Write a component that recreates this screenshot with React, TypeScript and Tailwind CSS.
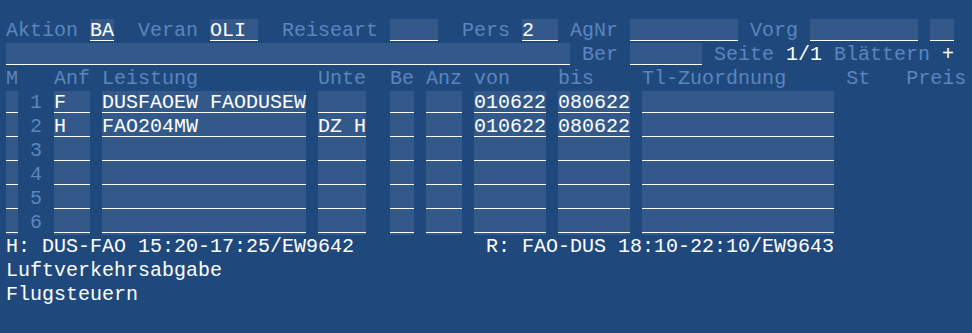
import React from 'react';

// 80-column host screen: each cell is 12px wide, each row 24px tall
const Lbl = ({ children, className = '' }: { children: React.ReactNode; className?: string }) => (
  <span className={`whitespace-pre text-[#5b85bc] ${className}`}>{children}</span>
);

const Val = ({ children, className = '' }: { children: React.ReactNode; className?: string }) => (
  <span className={`whitespace-pre text-white ${className}`}>{children}</span>
);

// field in the header area: 22px tall with underline, 2px of screen below
function HeadField({ w, value = '' }: { w: string; value?: string }) {
  return (
    <div className={`flex h-[24px] flex-col ${w}`}>
      <div className="h-[21px] overflow-visible bg-[#33598b] leading-[24px] text-white whitespace-pre">{value}</div>
      <div className="h-px bg-white" />
    </div>
  );
}

// field in the list: fills the whole row
function RowField({ w, value = '' }: { w: string; value?: string }) {
  return (
    <div className={`flex h-[24px] flex-col bg-[#33598b] ${w}`}>
      <div className="h-[21px] overflow-visible leading-[24px] text-white whitespace-pre">{value}</div>
      <div className="h-px bg-white" />
    </div>
  );
}

const rows = [
  { n: '1', anf: 'F', leist: 'DUSFAOEW FAODUSEW', unte: '', von: '010622', bis: '080622' },
  { n: '2', anf: 'H', leist: 'FAO204MW', unte: 'DZ H', von: '010622', bis: '080622' },
  { n: '3', anf: '', leist: '', unte: '', von: '', bis: '' },
  { n: '4', anf: '', leist: '', unte: '', von: '', bis: '' },
  { n: '5', anf: '', leist: '', unte: '', von: '', bis: '' },
  { n: '6', anf: '', leist: '', unte: '', von: '', bis: '' },
];

export default function App() {
  return (
    <div
      className="h-screen w-full overflow-hidden bg-[#1f497d] pl-[6px] pt-[19px] text-[20px] leading-[24px]"
      style={{ fontFamily: '"Liberation Mono", "DejaVu Sans Mono", monospace' }}
    >
      {/* row: Aktion / Veran / Reiseart / Pers / AgNr / Vorg */}
      <div className="flex h-[24px]">
        <Lbl className="w-[84px]">Aktion</Lbl>
        <HeadField w="w-[24px]" value="BA" />
        <div className="w-[24px]" />
        <Lbl className="w-[72px]">Veran</Lbl>
        <HeadField w="w-[48px]" value="OLI" />
        <div className="w-[24px]" />
        <Lbl className="w-[108px]">Reiseart</Lbl>
        <HeadField w="w-[48px]" />
        <div className="w-[24px]" />
        <Lbl className="w-[60px]">Pers</Lbl>
        <HeadField w="w-[36px]" value="2" />
        <div className="w-[12px]" />
        <Lbl className="w-[60px]">AgNr</Lbl>
        <HeadField w="w-[108px]" />
        <div className="w-[12px]" />
        <Lbl className="w-[60px]">Vorg</Lbl>
        <HeadField w="w-[108px]" />
        <div className="w-[12px]" />
        <HeadField w="w-[24px]" />
      </div>

      {/* row: free text / Ber / Seite */}
      <div className="flex h-[24px]">
        <HeadField w="w-[564px]" />
        <div className="w-[12px]" />
        <Lbl className="w-[48px]">Ber</Lbl>
        <HeadField w="w-[72px]" />
        <div className="w-[12px]" />
        <Lbl>Seite </Lbl>
        <Val>1/1</Val>
        <Lbl> Blättern </Lbl>
        <Val>+</Val>
      </div>

      {/* column headings */}
      <div className="flex h-[24px]">
        <Lbl>{'M   Anf Leistung          Unte  Be Anz von    bis    Tl-Zuordnung     St   Preis'}</Lbl>
      </div>

      {rows.map((r) => (
        <div key={r.n} className="flex h-[24px]">
          <RowField w="w-[12px]" />
          <div className="w-[12px]" />
          <Lbl className="w-[12px]">{r.n}</Lbl>
          <div className="w-[12px]" />
          <RowField w="w-[36px]" value={r.anf} />
          <div className="w-[12px]" />
          <RowField w="w-[204px]" value={r.leist} />
          <div className="w-[12px]" />
          <RowField w="w-[48px]" value={r.unte} />
          <div className="w-[24px]" />
          <RowField w="w-[24px]" />
          <div className="w-[12px]" />
          <RowField w="w-[36px]" />
          <div className="w-[12px]" />
          <RowField w="w-[72px]" value={r.von} />
          <div className="w-[12px]" />
          <RowField w="w-[72px]" value={r.bis} />
          <div className="w-[12px]" />
          <RowField w="w-[192px]" />
        </div>
      ))}

      <div className="flex h-[24px]">
        <Val className="w-[480px]">H: DUS-FAO 15:20-17:25/EW9642</Val>
        <Val>R: FAO-DUS 18:10-22:10/EW9643</Val>
      </div>
      <div className="h-[24px]">
        <Val>Luftverkehrsabgabe</Val>
      </div>
      <div className="h-[24px]">
        <Val>Flugsteuern</Val>
      </div>
    </div>
  );
}
